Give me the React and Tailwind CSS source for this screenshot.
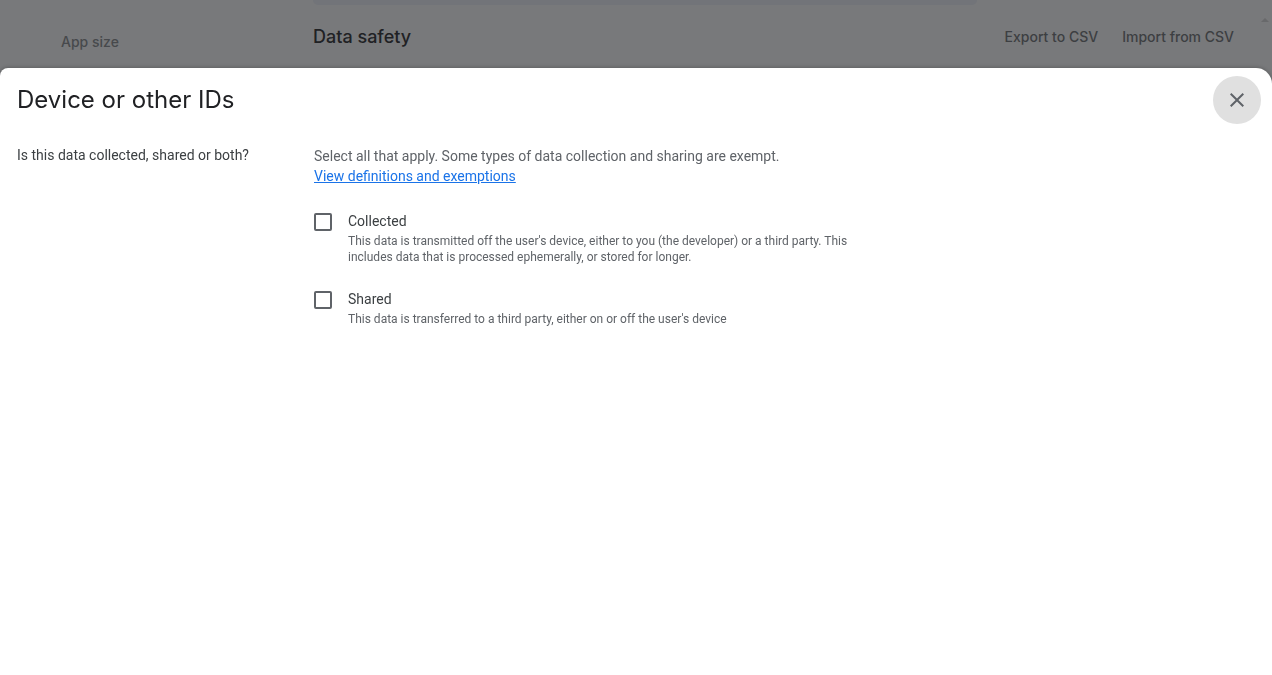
import React from 'react';

function Option({ id, label, children }) {
  return (
    <div className="flex items-start gap-4">
      <input
        id={id}
        type="checkbox"
        aria-describedby={`${id}-hint`}
        className="mt-0.5 size-[18px] shrink-0 appearance-none rounded-xs border-2 border-[#5f6368] bg-white checked:border-[#1a73e8] checked:bg-[#1a73e8]"
      />
      <div className="flex flex-col">
        <label htmlFor={id} className="text-sm leading-5 text-[#3c4043]">
          {label}
        </label>
        <p id={`${id}-hint`} className="pt-0.5 text-xs leading-4 text-[#5f6368]">
          {children}
        </p>
      </div>
    </div>
  );
}

function PageBehind() {
  return (
    <div className="flex h-screen bg-[#78797b] font-['Inter',sans-serif]">
      <nav className="flex w-[313px] shrink-0 items-start pt-8 pl-[61px]">
        <a href="#app-size" className="text-sm leading-5 font-medium text-[#47494c]">
          App size
        </a>
      </nav>
      <main className="flex grow flex-col">
        <div className="h-[5px] w-[664px] rounded-b-lg bg-[#727479]" />
        <div className="flex items-center justify-between pt-[18px] pr-[38px]">
          <h2 className="text-lg leading-7 font-medium text-[#202124]">Data safety</h2>
          <div className="flex gap-6 text-sm leading-5 font-medium text-[#3d3f42]">
            <button type="button">Export to CSV</button>
            <button type="button">Import from CSV</button>
          </div>
        </div>
      </main>
      <svg viewBox="0 0 8 4" className="absolute top-[18px] right-[3px] h-1 w-2" aria-hidden="true">
        <path d="M4 0 8 4H0z" fill="#68696b" />
      </svg>
    </div>
  );
}

export default function App() {
  return (
    <>
      <PageBehind />
      <div className="fixed inset-0 flex flex-col pt-[68px]">
        <section
          role="dialog"
          aria-modal="true"
          aria-labelledby="dialog-title"
          className="grow rounded-tl-lg rounded-tr-2xl bg-white font-['Roboto',sans-serif] shadow-[0_0_4px_rgba(0,0,0,0.3)]"
        >
          <header className="flex items-start justify-between pt-2 pr-[11px] pl-[17px]">
            <h1
              id="dialog-title"
              className="pt-2 font-['Inter',sans-serif] text-2xl leading-8 text-[#202124]"
            >
              Device or other IDs
            </h1>
            <button
              type="button"
              aria-label="Close"
              className="flex size-12 items-center justify-center rounded-full bg-[#e0e0e0] text-[#5f6368]"
            >
              <svg viewBox="0 0 24 24" className="size-6" fill="currentColor" aria-hidden="true">
                <path d="M19 6.41 17.59 5 12 10.59 6.41 5 5 6.41 10.59 12 5 17.59 6.41 19 12 13.41 17.59 19 19 17.59 13.41 12z" />
              </svg>
            </button>
          </header>
          <div className="flex pt-[21px] pl-[17px]">
            <h2 className="w-[297px] shrink-0 text-sm leading-5 text-[#3c4043]">
              Is this data collected, shared or both?
            </h2>
            <div className="flex max-w-[566px] flex-col gap-6">
              <p className="py-px text-sm leading-5 text-[#5f6368]">
                Select all that apply. Some types of data collection and sharing are exempt.
                <br />
                <a href="#definitions" className="text-[#1a73e8] underline">
                  View definitions and exemptions
                </a>
              </p>
              <Option id="collected" label="Collected">
                This data is transmitted off the user's device, either to you (the developer) or a
                third party. This
                <br />
                includes data that is processed ephemerally, or stored for longer.
              </Option>
              <Option id="shared" label="Shared">
                This data is transferred to a third party, either on or off the user's device
              </Option>
            </div>
          </div>
        </section>
      </div>
    </>
  );
}
